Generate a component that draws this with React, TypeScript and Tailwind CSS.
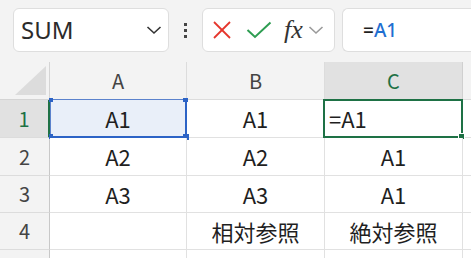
import React from 'react'

const cellFont = { fontFamily: '"Noto Sans CJK JP", "Noto Sans", sans-serif' }

const rows = [
    { n: '1', a: 'A1', b: 'A1', c: '=A1', h: 'h-[38px]' },
    { n: '2', a: 'A2', b: 'A2', c: 'A1', h: 'h-[38px]' },
    { n: '3', a: 'A3', b: 'A3', c: 'A1', h: 'h-[37px]' },
    { n: '4', a: '', b: '相対参照', c: '絶対参照', h: 'h-[37px]' },
    { n: '', a: '', b: '', c: '', h: 'h-[37px]' },
]

function Toolbar() {
    return (
        <div className="h-[62px] bg-[#f3f3f3] flex items-start pt-2 pl-[13px]" style={{ fontFamily: '"Noto Sans", "Open Sans", sans-serif' }}>
            {/* name box */}
            <div className="w-[156px] h-[44px] shrink-0 bg-white border border-[#dedede] rounded-[6px] flex items-center pl-[7px] pr-[6px]">
                <span className="text-[24px] leading-none text-[#2b2b2b]">SUM</span>
                <svg className="ml-auto" width="16" height="10" viewBox="0 0 16 10">
                    <polyline points="1.5,2 8,8 14.5,2" fill="none" stroke="#333" strokeWidth="1.6" />
                </svg>
            </div>
            {/* more dots */}
            <div className="w-[33px] h-[44px] shrink-0 flex flex-col items-center justify-center gap-[3px]">
                <span className="w-[3px] h-[3px] bg-[#444]" />
                <span className="w-[3px] h-[3px] bg-[#444]" />
                <span className="w-[3px] h-[3px] bg-[#444]" />
            </div>
            {/* cancel / enter / fx */}
            <div className="w-[133px] h-[44px] shrink-0 bg-white border border-[#dedede] rounded-[6px] flex items-center pl-[9px]">
                <svg width="20" height="20" viewBox="0 0 20 20">
                    <line x1="2" y1="2" x2="18" y2="18" stroke="#e5352b" strokeWidth="1.8" />
                    <line x1="18" y1="2" x2="2" y2="18" stroke="#e5352b" strokeWidth="1.8" />
                </svg>
                <svg className="ml-[14px]" width="26" height="18" viewBox="0 0 26 18">
                    <polyline points="1.5,9 9,16 24.5,1.5" fill="none" stroke="#2e9d52" strokeWidth="2" />
                </svg>
                <span className="ml-[12px] text-[26px] leading-none italic text-[#333]" style={{ fontFamily: '"Liberation Serif", serif' }}>fx</span>
                <svg className="ml-[5px]" width="16" height="10" viewBox="0 0 16 10">
                    <polyline points="1.5,2 8,8 14.5,2" fill="none" stroke="#9a9a9a" strokeWidth="1.6" />
                </svg>
            </div>
            {/* formula input */}
            <div className="ml-[7px] flex-1 h-[44px] bg-white border border-[#dedede] border-r-0 rounded-l-[6px] flex items-center pl-[20px]">
                <span className="text-[19px] leading-none font-medium text-[#1f1f1f]">=</span>
                <span className="text-[19px] leading-none font-medium text-[#1f6fd1]">A1</span>
            </div>
        </div>
    )
}

function Sheet() {
    return (
        <div className="grid grid-cols-[50px_137px_138px_138px_1fr]" style={cellFont}>
            {/* header row */}
            <div className="relative h-[38px] bg-[#f3f3f3] border-r border-b border-[#d4d4d4]">
                <svg className="absolute right-[3px] bottom-[4px]" width="31" height="29" viewBox="0 0 31 29">
                    <polygon points="31,0 31,29 0,29" fill="#dcdcdc" />
                </svg>
            </div>
            <div className="h-[38px] bg-[#f3f3f3] border-r border-b border-[#dcdcdc] flex items-center justify-center text-[20px] text-[#444]">A</div>
            <div className="h-[38px] bg-[#f3f3f3] border-r border-b border-[#dcdcdc] flex items-center justify-center text-[20px] text-[#444]">B</div>
            <div className="h-[38px] bg-[#e1e1e1] border-r border-b border-[#d0d0d0] flex items-center justify-center text-[20px] text-[#1e7145]">C</div>
            <div className="h-[38px] bg-[#f3f3f3] border-b border-[#dcdcdc]" />

            {rows.map((r, i) => (
                <React.Fragment key={i}>
                    <div className={`${r.h} ${i === 0 ? 'bg-[#e1e1e1] text-[#1e7145] border-r-2 border-r-[#1e7145]' : 'bg-[#f3f3f3] text-[#444] border-r border-r-[#c8c8c8]'} border-b border-b-[#dcdcdc] flex items-center justify-center text-[20px]`}>
                        {r.n}
                    </div>
                    <div className={`relative ${r.h} ${i === 0 ? 'bg-[#e9eff9]' : 'bg-white'} border-r border-b border-[#e1e1e1] flex items-center justify-center text-[22px] text-[#1f1f1f]`}>
                        {r.a}
                        {i === 0 && (
                            <div className="absolute -top-px left-0 -right-px -bottom-px border-t border-l border-[#5b82cc] border-r-2 border-b-2 border-r-[#2c63c6] border-b-[#2c63c6]">
                                <span className="absolute -top-[2px] -left-[2px] w-[4px] h-[4px] bg-[#2c63c6]" />
                                <span className="absolute -top-[2px] -right-[3px] w-[5px] h-[4px] bg-[#2c63c6]" />
                                <span className="absolute -bottom-[3px] -left-[2px] w-[4px] h-[5px] bg-[#2c63c6]" />
                                <span className="absolute -bottom-[4px] -right-[4px] w-[6px] h-[6px] bg-[#2c63c6]" />
                            </div>
                        )}
                    </div>
                    <div className={`${r.h} bg-white border-r border-b border-[#e1e1e1] flex items-center justify-center text-[22px] text-[#1f1f1f]`}>
                        {r.b}
                    </div>
                    <div className={`relative ${r.h} bg-white border-r border-b border-[#e1e1e1] flex items-center ${i === 0 ? 'justify-start pl-[4px]' : 'justify-center'} text-[22px] text-[#1f1f1f]`}>
                        {r.c}
                        {i === 0 && (
                            <div className="absolute -top-px -left-[2px] -right-px -bottom-px border-2 border-[#1e7145]">
                                <span className="absolute -bottom-[4px] -right-[4px] w-[7px] h-[7px] bg-[#1e7145] border border-white" />
                            </div>
                        )}
                    </div>
                    <div className={`${r.h} bg-white border-b border-[#e1e1e1]`} />
                </React.Fragment>
            ))}
        </div>
    )
}

export default function App() {
    return (
        <div className="w-[471px] h-[258px] overflow-hidden bg-white">
            <Toolbar />
            <Sheet />
        </div>
    )
}
